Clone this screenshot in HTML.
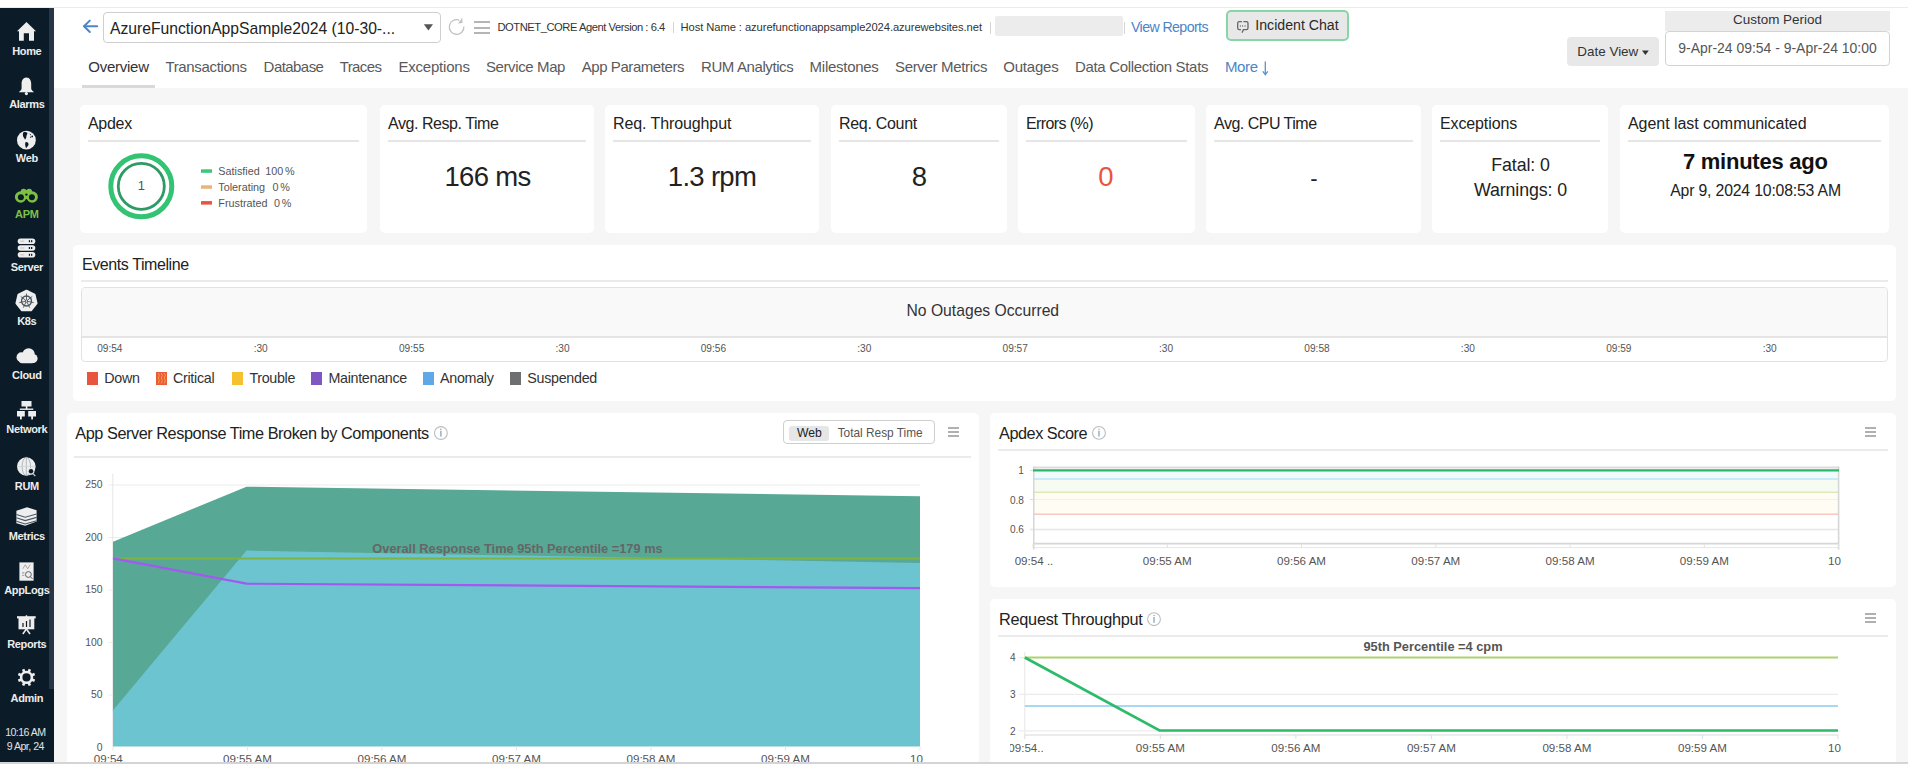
<!DOCTYPE html><html><head><meta charset="utf-8"><style>
html,body{margin:0;padding:0;}
body{width:1908px;height:764px;position:relative;overflow:hidden;background:#f6f6f6;font-family:"Liberation Sans",sans-serif;}
.t{position:absolute;white-space:nowrap;}
.r{position:absolute;box-sizing:border-box;}
svg{position:absolute;overflow:visible;}
</style></head><body>

<div class="r" style="left:0px;top:0px;width:1908px;height:8px;background:#fff;"></div>
<div class="r" style="left:0px;top:7px;width:1908px;height:1px;background:#ebebeb;"></div>
<div class="r" style="left:54px;top:8px;width:1854px;height:80px;background:#fff;"></div>
<div class="r" style="left:0px;top:8px;width:54px;height:754px;background:#0b1c28;"></div>
<div class="r" style="left:49px;top:8px;width:5px;height:681px;background:#263646;"></div>
<div class="t" style="top:45.89px;font-size:11px;line-height:11px;color:#ededed;font-weight:700;letter-spacing:-0.35px;left:-373.2px;width:800px;text-align:center;">Home</div>
<div class="t" style="top:99.49px;font-size:11px;line-height:11px;color:#ededed;font-weight:700;letter-spacing:-0.35px;left:-373.2px;width:800px;text-align:center;">Alarms</div>
<div class="t" style="top:153.49px;font-size:11px;line-height:11px;color:#ededed;font-weight:700;letter-spacing:-0.35px;left:-373.2px;width:800px;text-align:center;">Web</div>
<div class="t" style="top:208.69px;font-size:11px;line-height:11px;color:#7dc242;font-weight:700;letter-spacing:-0.35px;left:-373.2px;width:800px;text-align:center;">APM</div>
<div class="t" style="top:261.79px;font-size:11px;line-height:11px;color:#ededed;font-weight:700;letter-spacing:-0.35px;left:-373.2px;width:800px;text-align:center;">Server</div>
<div class="t" style="top:315.79px;font-size:11px;line-height:11px;color:#ededed;font-weight:700;letter-spacing:-0.35px;left:-373.2px;width:800px;text-align:center;">K8s</div>
<div class="t" style="top:369.59px;font-size:11px;line-height:11px;color:#ededed;font-weight:700;letter-spacing:-0.35px;left:-373.2px;width:800px;text-align:center;">Cloud</div>
<div class="t" style="top:423.59px;font-size:11px;line-height:11px;color:#ededed;font-weight:700;letter-spacing:-0.35px;left:-373.2px;width:800px;text-align:center;">Network</div>
<div class="t" style="top:481.09px;font-size:11px;line-height:11px;color:#ededed;font-weight:700;letter-spacing:-0.35px;left:-373.2px;width:800px;text-align:center;">RUM</div>
<div class="t" style="top:530.79px;font-size:11px;line-height:11px;color:#ededed;font-weight:700;letter-spacing:-0.35px;left:-373.2px;width:800px;text-align:center;">Metrics</div>
<div class="t" style="top:584.79px;font-size:11px;line-height:11px;color:#ededed;font-weight:700;letter-spacing:-0.35px;left:-373.2px;width:800px;text-align:center;">AppLogs</div>
<div class="t" style="top:638.79px;font-size:11px;line-height:11px;color:#ededed;font-weight:700;letter-spacing:-0.35px;left:-373.2px;width:800px;text-align:center;">Reports</div>
<div class="t" style="top:692.79px;font-size:11px;line-height:11px;color:#ededed;font-weight:700;letter-spacing:-0.35px;left:-373.2px;width:800px;text-align:center;">Admin</div>
<div class="t" style="top:726.63px;font-size:10.6px;line-height:10.6px;color:#e2e2e2;letter-spacing:-0.55px;left:-374.7px;width:800px;text-align:center;">10:16 AM</div>
<div class="t" style="top:740.63px;font-size:10.6px;line-height:10.6px;color:#e2e2e2;letter-spacing:-0.5px;left:-374.7px;width:800px;text-align:center;">9 Apr, 24</div>
<svg style="left:0;top:0" width="54" height="764"><g fill="#eeeeee"><path d="M17 31.2 L26.5 22 L36 31.2 L34 31.2 L34 40.7 L29 40.7 L29 33.3 L23.8 33.3 L23.8 40.7 L19 40.7 L19 31.2 Z"/><path d="M26.4 77.5 C23 77.5 21.6 80.5 21.6 84 L21.6 88.5 C21.6 90 20 91 18.8 92.3 L34 92.3 C32.8 91 31.2 90 31.2 88.5 L31.2 84 C31.2 80.5 29.8 77.5 26.4 77.5 Z"/><circle cx="26.4" cy="93.6" r="1.6"/><circle cx="26.4" cy="140.2" r="9.4"/></g><g fill="#0b1c28"><path d="M23.3 132.6 C24.5 131.8 26.3 132 27.2 132.8 C27.8 133.6 27 134.6 26.6 135.4 C26.2 136.4 26.6 137.4 25.8 138.6 C25.3 139.6 24.8 139.8 24.6 139 C24.4 138 23.6 137.6 23.2 136.6 C22.8 135.4 22.7 133.4 23.3 132.6Z"/><path d="M26.2 142 C27.6 142.2 28.8 143.2 28.6 144.6 C28.4 145.8 27.4 146.6 26.6 147.8 C26.2 148.2 25.8 147.8 25.7 147.2 C25.4 145.8 25 144.6 25.2 143.2 C25.3 142.4 25.6 142 26.2 142Z"/><path d="M29.6 133.6 L31 134.2 L30.4 135.6 Z"/><circle cx="32.2" cy="136.4" r="0.9"/><circle cx="30.6" cy="137.2" r="0.6"/></g></svg>
<svg style="left:0;top:0" width="54" height="764"><g fill="#7cc142"><circle cx="20.6" cy="197" r="5.7"/><circle cx="32.2" cy="197" r="5.7"/><circle cx="23.6" cy="191.6" r="2.9"/><circle cx="29.2" cy="191.6" r="2.9"/><rect x="23" y="190" width="6.8" height="9"/></g><g fill="#0b1c28"><circle cx="20.9" cy="197.3" r="3.0"/><circle cx="31.9" cy="197.3" r="3.0"/><circle cx="26.4" cy="194.6" r="1.2"/></g></svg>
<svg style="left:0;top:0" width="54" height="764"><g fill="#eeeeee"><rect x="17.7" y="238.4" width="17.6" height="5.6" rx="2.8"/><rect x="17.7" y="245.2" width="17.6" height="5.6" rx="2.8"/><rect x="17.7" y="252" width="17.6" height="5.6" rx="2.8"/></g><g fill="#0b1c28"><rect x="28.8" y="240.2" width="1.3" height="2"/><rect x="31" y="240.2" width="1.3" height="2"/><rect x="28.8" y="247" width="1.3" height="2"/><rect x="31" y="247" width="1.3" height="2"/><rect x="28.8" y="253.8" width="1.3" height="2"/><rect x="31" y="253.8" width="1.3" height="2"/></g><g fill="#c9c9c9"><rect x="20.2" y="240.6" width="4" height="1.2"/><rect x="20.2" y="247.4" width="4" height="1.2"/><rect x="20.2" y="254.2" width="4" height="1.2"/></g></svg>
<svg style="left:0;top:0" width="54" height="764"><polygon points="26.50,290.80 34.47,294.64 36.44,303.27 30.93,310.19 22.07,310.19 16.56,303.27 18.53,294.64" fill="#eeeeee" stroke="#eeeeee" stroke-width="2.2" stroke-linejoin="round"/><g stroke="#46525c" fill="none"><circle cx="26.5" cy="301.0" r="5.0" stroke-width="1.3"/><g stroke-width="0.9"><line x1="26.50" y1="299.80" x2="26.50" y2="293.60"/><line x1="27.44" y1="300.25" x2="32.29" y2="296.39"/><line x1="27.67" y1="301.27" x2="33.71" y2="302.65"/><line x1="27.02" y1="302.08" x2="29.71" y2="307.67"/><line x1="25.98" y1="302.08" x2="23.29" y2="307.67"/><line x1="25.33" y1="301.27" x2="19.29" y2="302.65"/><line x1="25.56" y1="300.25" x2="20.71" y2="296.39"/></g><circle cx="26.5" cy="301.0" r="1.2" stroke-width="0.9"/></g></svg>
<svg style="left:0;top:0" width="54" height="764"><g fill="#eeeeee"><circle cx="28.6" cy="354.5" r="6.2"/><circle cx="21.5" cy="357.2" r="5"/><circle cx="33" cy="358.5" r="4.6"/><rect x="19" y="357" width="16" height="6.3" rx="3"/></g></svg>
<svg style="left:0;top:0" width="54" height="764"><g fill="#eeeeee"><rect x="21.5" y="401" width="10" height="5.5"/><rect x="25.8" y="406" width="1.6" height="3.2"/><rect x="19.8" y="408.5" width="13.5" height="1.4"/><rect x="17" y="411" width="7.8" height="5.5"/><rect x="28.2" y="411" width="7.8" height="5.5"/><rect x="20" y="416" width="1.8" height="3.4"/><rect x="31.2" y="416" width="1.8" height="3.4"/></g></svg>
<svg style="left:0;top:0" width="54" height="764"><circle cx="26.3" cy="466.5" r="9.3" fill="#eeeeee"/><g stroke="#9aa4ab" stroke-width="0.7" fill="none"><ellipse cx="26.3" cy="466.5" rx="4.2" ry="9.2"/><line x1="26.3" y1="457.3" x2="26.3" y2="475.7"/><line x1="17.2" y1="466.5" x2="35.4" y2="466.5" stroke="#c8ced2"/></g><circle cx="31" cy="471.3" r="3.4" fill="#e6e6e6"/><circle cx="31" cy="471.3" r="2.2" fill="#0b1c28"/><line x1="33.2" y1="473.8" x2="35.3" y2="476.2" stroke="#cfcfcf" stroke-width="1.2"/></svg>
<svg style="left:0;top:0" width="54" height="764"><path d="M16.4 510.8 L27 507.3 L36.6 510.2 L36.6 521.6 L25.2 525.8 L16.4 523.2 Z" fill="#eeeeee"/><path d="M16.4 514.4 L25.2 517.2 L36.6 514.0" fill="none" stroke="#4a5863" stroke-width="1.1"/><path d="M16.4 517.8 L25.2 520.6 L36.6 517.4" fill="none" stroke="#4a5863" stroke-width="1.1"/><path d="M16.4 521.2 L25.2 524.0 L36.6 520.8" fill="none" stroke="#4a5863" stroke-width="1.1"/></svg>
<svg style="left:0;top:0" width="54" height="764"><rect x="19.4" y="562.4" width="14.2" height="18.3" fill="#eeeeee"/><path d="M22.8 568.8 L25.3 564.8 L27.7 568.8 L30.2 564.6" stroke="#9a9a9a" stroke-width="0.8" fill="none"/><circle cx="28.4" cy="574.5" r="2.9" stroke="#5a5f63" stroke-width="1.0" fill="none"/><line x1="30.5" y1="576.8" x2="32.6" y2="579" stroke="#666" stroke-width="1.0"/><rect x="22" y="572.3" width="2.4" height="1.1" fill="#9a9a9a"/><rect x="22" y="574.8" width="2.4" height="1.1" fill="#aaa"/></svg>
<svg style="left:0;top:0" width="54" height="764"><g fill="#eeeeee"><rect x="17" y="616.2" width="18.7" height="2.2"/><rect x="18.5" y="617" width="15.8" height="12.3"/><rect x="25.8" y="615.2" width="1.4" height="2"/></g><g stroke="#0b1c28" stroke-width="1.2"><line x1="23" y1="623" x2="23" y2="627"/><line x1="26.5" y1="621" x2="26.5" y2="627"/><line x1="30" y1="619.5" x2="30" y2="627"/></g><g stroke="#eeeeee" stroke-width="1.5"><line x1="26.4" y1="629" x2="22.8" y2="634"/><line x1="26.4" y1="629" x2="30" y2="634"/></g></svg>
<svg style="left:0;top:0" width="54" height="764"><circle cx="26.5" cy="677.4" r="5.4" fill="none" stroke="#eeeeee" stroke-width="2.6"/><g stroke="#eeeeee" stroke-width="2.6" stroke-linecap="butt"><line x1="31.12" y1="679.31" x2="34.63" y2="680.77"/><line x1="28.41" y1="682.02" x2="29.87" y2="685.53"/><line x1="24.59" y1="682.02" x2="23.13" y2="685.53"/><line x1="21.88" y1="679.31" x2="18.37" y2="680.77"/><line x1="21.88" y1="675.49" x2="18.37" y2="674.03"/><line x1="24.59" y1="672.78" x2="23.13" y2="669.27"/><line x1="28.41" y1="672.78" x2="29.87" y2="669.27"/><line x1="31.12" y1="675.49" x2="34.63" y2="674.03"/></g></svg>
<svg style="left:0;top:0" width="120" height="60"><g stroke="#4d86c8" stroke-width="2" fill="none" stroke-linecap="round" stroke-linejoin="round"><path d="M89.8 20.6 L84 26.3 L89.8 32"/><line x1="84.2" y1="26.3" x2="97.2" y2="26.3"/></g></svg>
<div class="r" style="left:103px;top:12px;width:338px;height:31px;background:#fff;border:1px solid #cfcfcf;border-radius:4px;"></div>
<div class="t" style="top:20.51px;font-size:15.7px;line-height:15.7px;color:#222;left:110px;">AzureFunctionAppSample2024 (10-30-...</div>
<svg style="left:0;top:0" width="500" height="60"><path d="M423.8 24.3 L433 24.3 L428.4 30.6 Z" fill="#555"/></svg>
<svg style="left:0;top:0" width="520" height="60"><path d="M463.9 26.5 A7.3 7.3 0 1 1 459.3 20.2" fill="none" stroke="#c2c2c2" stroke-width="1.3"/><path d="M457.9 23.6 L462.3 17.8 L462.5 23.1 Z" fill="#c2c2c2"/></svg>
<div class="r" style="left:474px;top:21.3px;width:16px;height:2px;background:#b5b5b5;"></div>
<div class="r" style="left:474px;top:26.7px;width:16px;height:2px;background:#b5b5b5;"></div>
<div class="r" style="left:474px;top:32px;width:16px;height:2px;background:#b5b5b5;"></div>
<div class="t" style="top:22.12px;font-size:11.2px;line-height:11.2px;color:#333;letter-spacing:-0.46px;left:497.5px;">DOTNET_CORE Agent Version : 6.4</div>
<div class="r" style="left:673px;top:21.7px;width:1px;height:11.3px;background:#d5d5d5;"></div>
<div class="t" style="top:22.12px;font-size:11.2px;line-height:11.2px;color:#333;letter-spacing:-0.07px;left:680.5px;">Host Name : azurefunctionappsample2024.azurewebsites.net</div>
<div class="r" style="left:990px;top:21.5px;width:1px;height:12px;background:#d5d5d5;"></div>
<div class="r" style="left:995px;top:16px;width:128px;height:20px;background:#ececec;border-radius:2px;"></div>
<div class="r" style="left:1124px;top:21.5px;width:1px;height:12px;background:#d5d5d5;"></div>
<div class="t" style="top:19.68px;font-size:14.2px;line-height:14.2px;color:#4a85c8;letter-spacing:-0.6px;left:1131px;">View Reports</div>
<div class="r" style="left:1226px;top:10px;width:123px;height:30.5px;background:#e8e8e8;border:2px solid #86d6a6;border-radius:5px;"></div>
<svg style="left:0;top:0" width="1300" height="60"><g fill="none" stroke="#666" stroke-width="1.3" stroke-linecap="round"><path d="M1241.4 21.7 L1239.3 21.7 Q1237.7 21.7 1237.7 23.3 L1237.7 28.1 Q1237.7 29.7 1239.3 29.7 L1240.5 29.7"/><path d="M1243.9 21.7 L1246.4 21.7 Q1248 21.7 1248 23.3 L1248 28.1 Q1248 29.7 1246.4 29.7 L1243.4 29.7 L1242.2 32.2"/></g><g fill="#888"><rect x="1239.9" y="25" width="0.9" height="2"/><rect x="1242.2" y="25" width="0.9" height="2"/><rect x="1244.6" y="25" width="0.9" height="2"/></g></svg>
<div class="t" style="top:18.32px;font-size:14.15px;line-height:14.15px;color:#2a2a2a;left:1255.3px;">Incident Chat</div>
<div class="r" style="left:1567px;top:36.5px;width:92px;height:29px;background:#e8e8e8;border-radius:4px;"></div>
<div class="t" style="top:44.71px;font-size:13.45px;line-height:13.45px;color:#333;left:1577.3px;">Date View</div>
<svg style="left:0;top:0" width="1700" height="70"><path d="M1642 50.5 L1648.8 50.5 L1645.4 55 Z" fill="#333"/></svg>
<div class="r" style="left:1665px;top:10.7px;width:225px;height:20px;background:#ececec;"></div>
<div class="t" style="top:13.01px;font-size:13.45px;line-height:13.45px;color:#333;left:1377.5px;width:800px;text-align:center;">Custom Period</div>
<div class="r" style="left:1665px;top:30.8px;width:225px;height:35px;background:#fff;border:1px solid #d3d3d3;border-radius:4px;"></div>
<div class="t" style="top:42.39px;font-size:13.95px;line-height:13.95px;color:#555;left:1377.5px;width:800px;text-align:center;">9-Apr-24 09:54 - 9-Apr-24 10:00</div>
<div class="t" style="top:58.90px;font-size:15px;line-height:15px;color:#333;letter-spacing:-0.26px;left:88.30000000000001px;">Overview</div>
<div class="t" style="top:58.90px;font-size:15px;line-height:15px;color:#5a5a5a;letter-spacing:-0.33px;left:165.4px;">Transactions</div>
<div class="t" style="top:58.90px;font-size:15px;line-height:15px;color:#5a5a5a;letter-spacing:-0.55px;left:263.59999999999997px;">Database</div>
<div class="t" style="top:58.90px;font-size:15px;line-height:15px;color:#5a5a5a;letter-spacing:-0.6px;left:339.7px;">Traces</div>
<div class="t" style="top:58.90px;font-size:15px;line-height:15px;color:#5a5a5a;letter-spacing:-0.2px;left:398.4px;">Exceptions</div>
<div class="t" style="top:58.90px;font-size:15px;line-height:15px;color:#5a5a5a;letter-spacing:-0.38px;left:485.9px;">Service Map</div>
<div class="t" style="top:58.90px;font-size:15px;line-height:15px;color:#5a5a5a;letter-spacing:-0.43px;left:581.6999999999999px;">App Parameters</div>
<div class="t" style="top:58.90px;font-size:15px;line-height:15px;color:#5a5a5a;letter-spacing:-0.4px;left:701.0px;">RUM Analytics</div>
<div class="t" style="top:58.90px;font-size:15px;line-height:15px;color:#5a5a5a;letter-spacing:-0.27px;left:809.6px;">Milestones</div>
<div class="t" style="top:58.90px;font-size:15px;line-height:15px;color:#5a5a5a;letter-spacing:-0.33px;left:895.0px;">Server Metrics</div>
<div class="t" style="top:58.90px;font-size:15px;line-height:15px;color:#5a5a5a;letter-spacing:-0.22px;left:1003.3px;">Outages</div>
<div class="t" style="top:58.90px;font-size:15px;line-height:15px;color:#5a5a5a;letter-spacing:-0.33px;left:1075.0px;">Data Collection Stats</div>
<div class="t" style="top:58.90px;font-size:15px;line-height:15px;color:#4a86c8;letter-spacing:-0.4px;left:1225.0px;">More</div>
<svg style="left:0;top:0" width="1300" height="90"><g stroke="#5a94d0" stroke-width="1.3" fill="none"><line x1="1265.3" y1="61.4" x2="1265.3" y2="74"/><path d="M1262.8 71.3 L1265.3 74.6 L1267.8 71.3"/></g></svg>
<div class="r" style="left:82px;top:85px;width:73px;height:3px;background:#d9d9d9;"></div>
<div class="r" style="left:80px;top:105px;width:287px;height:128px;background:#fff;border-radius:5px;"></div>
<div class="t" style="top:116.46px;font-size:16px;line-height:16px;color:#222;letter-spacing:-0.3px;left:88px;">Apdex</div>
<div class="r" style="left:88px;top:140px;width:271px;height:2px;background:#e6e6e6;"></div>
<div class="r" style="left:380px;top:105px;width:214px;height:128px;background:#fff;border-radius:5px;"></div>
<div class="t" style="top:116.46px;font-size:16px;line-height:16px;color:#222;letter-spacing:-0.45px;left:388px;">Avg. Resp. Time</div>
<div class="r" style="left:388px;top:140px;width:198px;height:2px;background:#e6e6e6;"></div>
<div class="r" style="left:605px;top:105px;width:214px;height:128px;background:#fff;border-radius:5px;"></div>
<div class="t" style="top:116.46px;font-size:16px;line-height:16px;color:#222;letter-spacing:-0.1px;left:613px;">Req. Throughput</div>
<div class="r" style="left:613px;top:140px;width:198px;height:2px;background:#e6e6e6;"></div>
<div class="r" style="left:831px;top:105px;width:176px;height:128px;background:#fff;border-radius:5px;"></div>
<div class="t" style="top:116.46px;font-size:16px;line-height:16px;color:#222;letter-spacing:-0.3px;left:839px;">Req. Count</div>
<div class="r" style="left:839px;top:140px;width:160px;height:2px;background:#e6e6e6;"></div>
<div class="r" style="left:1018px;top:105px;width:177px;height:128px;background:#fff;border-radius:5px;"></div>
<div class="t" style="top:116.46px;font-size:16px;line-height:16px;color:#222;letter-spacing:-0.6px;left:1026px;">Errors (%)</div>
<div class="r" style="left:1026px;top:140px;width:161px;height:2px;background:#e6e6e6;"></div>
<div class="r" style="left:1206px;top:105px;width:215px;height:128px;background:#fff;border-radius:5px;"></div>
<div class="t" style="top:116.46px;font-size:16px;line-height:16px;color:#222;letter-spacing:-0.5px;left:1214px;">Avg. CPU Time</div>
<div class="r" style="left:1214px;top:140px;width:199px;height:2px;background:#e6e6e6;"></div>
<div class="r" style="left:1432px;top:105px;width:176px;height:128px;background:#fff;border-radius:5px;"></div>
<div class="t" style="top:116.46px;font-size:16px;line-height:16px;color:#222;letter-spacing:-0.12px;left:1440px;">Exceptions</div>
<div class="r" style="left:1440px;top:140px;width:160px;height:2px;background:#e6e6e6;"></div>
<div class="r" style="left:1620px;top:105px;width:269px;height:128px;background:#fff;border-radius:5px;"></div>
<div class="t" style="top:116.46px;font-size:16px;line-height:16px;color:#222;letter-spacing:-0.05px;left:1628px;">Agent last communicated</div>
<div class="r" style="left:1628px;top:140px;width:253px;height:2px;background:#e6e6e6;"></div>
<svg style="left:0;top:0" width="400" height="240"><circle cx="141.3" cy="186.3" r="30.5" fill="none" stroke="#32c472" stroke-width="5"/><circle cx="141.3" cy="186.3" r="23" fill="none" stroke="#2e9a64" stroke-width="2.8"/><rect x="201" y="169.3" width="11" height="3.5" fill="#3cc77a"/><rect x="201" y="185.3" width="11" height="3.5" fill="#e9b47a"/><rect x="201" y="201.1" width="11" height="3.5" fill="#e8553e"/></svg>
<div class="t" style="top:178.60px;font-size:13px;line-height:13px;color:#555;left:-258.7px;width:800px;text-align:center;">1</div>
<div class="t" style="top:166.46px;font-size:10.8px;line-height:10.8px;color:#555;left:218.3px;">Satisfied</div>
<div class="t" style="top:182.06px;font-size:10.8px;line-height:10.8px;color:#555;left:218.3px;">Tolerating</div>
<div class="t" style="top:198.46px;font-size:10.8px;line-height:10.8px;color:#555;left:218.3px;">Frustrated</div>
<div class="t" style="top:166.46px;font-size:10.8px;line-height:10.8px;color:#555;left:265.3px;">100<span style="margin-left:1.6px">%</span></div>
<div class="t" style="top:182.06px;font-size:10.8px;line-height:10.8px;color:#555;left:272.6px;">0<span style="margin-left:1.6px">%</span></div>
<div class="t" style="top:198.46px;font-size:10.8px;line-height:10.8px;color:#555;left:274.1px;">0<span style="margin-left:1.6px">%</span></div>
<div class="t" style="top:163.42px;font-size:27.5px;line-height:27.5px;color:#222;letter-spacing:-0.7px;left:87.5px;width:800px;text-align:center;">166 ms</div>
<div class="t" style="top:163.22px;font-size:27.5px;line-height:27.5px;color:#222;letter-spacing:-0.7px;left:312.0px;width:800px;text-align:center;">1.3 rpm</div>
<div class="t" style="top:163.22px;font-size:27.5px;line-height:27.5px;color:#222;left:519.5px;width:800px;text-align:center;">8</div>
<div class="t" style="top:163.12px;font-size:27.5px;line-height:27.5px;color:#e8553e;left:706.0px;width:800px;text-align:center;">0</div>
<div class="t" style="top:167.78px;font-size:22px;line-height:22px;color:#222;left:914.0px;width:800px;text-align:center;">-</div>
<div class="t" style="top:156.73px;font-size:17.8px;line-height:17.8px;color:#222;letter-spacing:-0.1px;left:1120.5px;width:800px;text-align:center;">Fatal: 0</div>
<div class="t" style="top:182.33px;font-size:17.8px;line-height:17.8px;color:#222;letter-spacing:-0.1px;left:1120.5px;width:800px;text-align:center;">Warnings: 0</div>
<div class="t" style="top:151.28px;font-size:22px;line-height:22px;color:#111;font-weight:700;letter-spacing:-0.25px;left:1355.3px;width:800px;text-align:center;">7 minutes ago</div>
<div class="t" style="top:182.83px;font-size:15.8px;line-height:15.8px;color:#222;letter-spacing:-0.18px;left:1355.6px;width:800px;text-align:center;">Apr 9, 2024 10:08:53 AM</div>
<div class="r" style="left:73px;top:245px;width:823px;height:156px;background:#fff;border-radius:5px;"></div>
<div class="r" style="left:73px;top:245px;width:1823px;height:156px;background:#fff;border-radius:5px;"></div>
<div class="t" style="top:256.66px;font-size:16px;line-height:16px;color:#222;letter-spacing:-0.42px;left:82px;">Events Timeline</div>
<div class="r" style="left:81px;top:280px;width:1807px;height:2px;background:#ebebeb;"></div>
<div class="r" style="left:81px;top:287px;width:1807px;height:75px;background:#fff;border:1px solid #e2e2e2;border-radius:4px;"></div>
<div class="r" style="left:82px;top:288px;width:1805px;height:48px;background:#f9f9f9;border-radius:3px 3px 0 0;"></div>
<div class="r" style="left:82px;top:336px;width:1805px;height:1.5px;background:#e4e4e4;"></div>
<div class="t" style="top:303.01px;font-size:15.7px;line-height:15.7px;color:#333;left:582.8px;width:800px;text-align:center;">No Outages Occurred</div>
<div class="t" style="top:343.71px;font-size:10.15px;line-height:10.15px;color:#555;left:-290.2px;width:800px;text-align:center;">09:54</div>
<div class="t" style="top:343.71px;font-size:10.15px;line-height:10.15px;color:#555;left:-139.3px;width:800px;text-align:center;">:30</div>
<div class="t" style="top:343.71px;font-size:10.15px;line-height:10.15px;color:#555;left:11.600000000000023px;width:800px;text-align:center;">09:55</div>
<div class="t" style="top:343.71px;font-size:10.15px;line-height:10.15px;color:#555;left:162.5px;width:800px;text-align:center;">:30</div>
<div class="t" style="top:343.71px;font-size:10.15px;line-height:10.15px;color:#555;left:313.4px;width:800px;text-align:center;">09:56</div>
<div class="t" style="top:343.71px;font-size:10.15px;line-height:10.15px;color:#555;left:464.29999999999995px;width:800px;text-align:center;">:30</div>
<div class="t" style="top:343.71px;font-size:10.15px;line-height:10.15px;color:#555;left:615.2px;width:800px;text-align:center;">09:57</div>
<div class="t" style="top:343.71px;font-size:10.15px;line-height:10.15px;color:#555;left:766.0999999999999px;width:800px;text-align:center;">:30</div>
<div class="t" style="top:343.71px;font-size:10.15px;line-height:10.15px;color:#555;left:917.0px;width:800px;text-align:center;">09:58</div>
<div class="t" style="top:343.71px;font-size:10.15px;line-height:10.15px;color:#555;left:1067.9px;width:800px;text-align:center;">:30</div>
<div class="t" style="top:343.71px;font-size:10.15px;line-height:10.15px;color:#555;left:1218.8px;width:800px;text-align:center;">09:59</div>
<div class="t" style="top:343.71px;font-size:10.15px;line-height:10.15px;color:#555;left:1369.7px;width:800px;text-align:center;">:30</div>
<div class="r" style="left:86.8px;top:372px;width:11px;height:12.5px;background:#e8553e;"></div>
<div class="t" style="top:370.90px;font-size:14.3px;line-height:14.3px;color:#333;letter-spacing:-0.3px;left:104.3px;">Down</div>
<div class="r" style="left:156.3px;top:372px;width:11px;height:12.5px;background:#ea5b3b;"></div>
<div class="t" style="top:370.90px;font-size:14.3px;line-height:14.3px;color:#333;letter-spacing:-0.3px;left:173px;">Critical</div>
<div class="r" style="left:232px;top:372px;width:11px;height:12.5px;background:#f6c12e;"></div>
<div class="t" style="top:370.90px;font-size:14.3px;line-height:14.3px;color:#333;letter-spacing:-0.35px;left:249.5px;">Trouble</div>
<div class="r" style="left:311px;top:372px;width:11px;height:12.5px;background:#7e57c2;"></div>
<div class="t" style="top:370.90px;font-size:14.3px;line-height:14.3px;color:#333;letter-spacing:-0.3px;left:328.4px;">Maintenance</div>
<div class="r" style="left:423.3px;top:372px;width:11px;height:12.5px;background:#5fa8e8;"></div>
<div class="t" style="top:370.90px;font-size:14.3px;line-height:14.3px;color:#333;letter-spacing:-0.3px;left:440px;">Anomaly</div>
<div class="r" style="left:510.2px;top:372px;width:11px;height:12.5px;background:#6d6f70;"></div>
<div class="t" style="top:370.90px;font-size:14.3px;line-height:14.3px;color:#333;letter-spacing:-0.3px;left:527.3px;">Suspended</div>
<svg style="left:0;top:0" width="300" height="400"><g fill="none" stroke="#f6a03f" stroke-width="1"><path d="M158.3 373 L159.3 375.5 L158.3 378 L159.3 380.5 L158.3 383.5"/><path d="M161.3 373 L162.3 375.5 L161.3 378 L162.3 380.5 L161.3 383.5"/><path d="M164.3 373 L165.3 375.5 L164.3 378 L165.3 380.5 L164.3 383.5"/></g></svg>
<div class="r" style="left:67px;top:413px;width:912px;height:351px;background:#fff;border-radius:5px 5px 0 0;"></div>
<div class="t" style="top:425.10px;font-size:16.3px;line-height:16.3px;color:#222;letter-spacing:-0.45px;left:75.3px;">App Server Response Time Broken by Components</div>
<div class="r" style="left:74px;top:456px;width:897px;height:2px;background:#ebebeb;"></div>
<div class="r" style="left:990px;top:413px;width:906px;height:174px;background:#fff;border-radius:5px;"></div>
<div class="t" style="top:425.00px;font-size:16.3px;line-height:16.3px;color:#222;letter-spacing:-0.47px;left:999px;">Apdex Score</div>
<div class="r" style="left:998px;top:449px;width:890px;height:2px;background:#ebebeb;"></div>
<div class="r" style="left:990px;top:599px;width:906px;height:165px;background:#fff;border-radius:5px 5px 0 0;"></div>
<div class="t" style="top:611.20px;font-size:16.3px;line-height:16.3px;color:#222;letter-spacing:-0.25px;left:999px;">Request Throughput</div>
<div class="r" style="left:998px;top:635px;width:890px;height:2px;background:#ebebeb;"></div>
<svg style="left:0;top:0" width="1908" height="764"><circle cx="440.9" cy="433" r="6.4" fill="none" stroke="#bdbdbd" stroke-width="1.1"/><rect x="440.29999999999995" y="430.8" width="1.2" height="5.8" fill="#7e9cbd"/><circle cx="440.9" cy="429.2" r="0.7" fill="#7e9cbd"/></svg>
<svg style="left:0;top:0" width="1908" height="764"><circle cx="1099" cy="432.9" r="6.4" fill="none" stroke="#bdbdbd" stroke-width="1.1"/><rect x="1098.4" y="430.7" width="1.2" height="5.8" fill="#7e9cbd"/><circle cx="1099" cy="429.09999999999997" r="0.7" fill="#7e9cbd"/></svg>
<svg style="left:0;top:0" width="1908" height="764"><circle cx="1154" cy="619.2" r="6.4" fill="none" stroke="#bdbdbd" stroke-width="1.1"/><rect x="1153.4" y="617.0" width="1.2" height="5.8" fill="#7e9cbd"/><circle cx="1154" cy="615.4000000000001" r="0.7" fill="#7e9cbd"/></svg>
<div class="r" style="left:947.7px;top:426.8px;width:11.5px;height:2px;background:#b0b0b0;"></div>
<div class="r" style="left:947.7px;top:430.8px;width:11.5px;height:2px;background:#b0b0b0;"></div>
<div class="r" style="left:947.7px;top:434.8px;width:11.5px;height:2px;background:#b0b0b0;"></div>
<div class="r" style="left:1864.8px;top:426.7px;width:11.5px;height:2px;background:#b0b0b0;"></div>
<div class="r" style="left:1864.8px;top:430.7px;width:11.5px;height:2px;background:#b0b0b0;"></div>
<div class="r" style="left:1864.8px;top:434.7px;width:11.5px;height:2px;background:#b0b0b0;"></div>
<div class="r" style="left:1864.8px;top:612.8px;width:11.5px;height:2px;background:#b0b0b0;"></div>
<div class="r" style="left:1864.8px;top:616.8px;width:11.5px;height:2px;background:#b0b0b0;"></div>
<div class="r" style="left:1864.8px;top:620.8px;width:11.5px;height:2px;background:#b0b0b0;"></div>
<div class="r" style="left:783px;top:420px;width:152px;height:24px;background:#fff;border:1px solid #cfcfcf;border-radius:4px;"></div>
<div class="r" style="left:789.4px;top:425.5px;width:40px;height:15.5px;background:#e6e6e6;border-radius:3px;"></div>
<div class="t" style="top:427.27px;font-size:12.2px;line-height:12.2px;color:#222;left:797px;">Web</div>
<div class="t" style="top:427.57px;font-size:11.85px;line-height:11.85px;color:#555;left:837.7px;">Total Resp Time</div>
<svg style="left:0;top:0" width="1908" height="764"><line x1="108.5" y1="695.1" x2="920" y2="695.1" stroke="#ececec" stroke-width="1"/><line x1="108.5" y1="642.6" x2="920" y2="642.6" stroke="#ececec" stroke-width="1"/><line x1="108.5" y1="590.0" x2="920" y2="590.0" stroke="#ececec" stroke-width="1"/><line x1="108.5" y1="537.5" x2="920" y2="537.5" stroke="#ececec" stroke-width="1"/><line x1="108.5" y1="485.0" x2="920" y2="485.0" stroke="#ececec" stroke-width="1"/><line x1="112.8" y1="473.5" x2="112.8" y2="747" stroke="#e6e6e6" stroke-width="1"/><path d="M113 541.7 L246.5 486.7 L920 496.2 L920 746.2 L113 746.2 Z" fill="#57a894"/><path d="M113 710.2 L246.5 550.5 L920 563 L920 746.2 L113 746.2 Z" fill="#6bc4d0"/><line x1="113" y1="558.4" x2="920" y2="558.4" stroke="#7cb342" stroke-width="2"/><path d="M113 558.3 L246.5 583.7 L920 588.2" fill="none" stroke="#a358f0" stroke-width="2.2"/><line x1="113.0" y1="746.2" x2="113.0" y2="750.5" stroke="#e6e6e6" stroke-width="1"/><line x1="247.5" y1="746.2" x2="247.5" y2="750.5" stroke="#e6e6e6" stroke-width="1"/><line x1="382.0" y1="746.2" x2="382.0" y2="750.5" stroke="#e6e6e6" stroke-width="1"/><line x1="516.5" y1="746.2" x2="516.5" y2="750.5" stroke="#e6e6e6" stroke-width="1"/><line x1="651.0" y1="746.2" x2="651.0" y2="750.5" stroke="#e6e6e6" stroke-width="1"/><line x1="785.5" y1="746.2" x2="785.5" y2="750.5" stroke="#e6e6e6" stroke-width="1"/><line x1="920.0" y1="746.2" x2="920.0" y2="750.5" stroke="#e6e6e6" stroke-width="1"/></svg>
<div class="t" style="top:542.76px;font-size:12.8px;line-height:12.8px;color:#666;font-weight:700;left:117.5px;width:800px;text-align:center;">Overall Response Time 95th Percentile =179 ms</div>
<div class="t" style="top:480.40px;font-size:10.4px;line-height:10.4px;color:#555;left:-697.4px;width:800px;text-align:right;">250</div>
<div class="t" style="top:532.92px;font-size:10.4px;line-height:10.4px;color:#555;left:-697.4px;width:800px;text-align:right;">200</div>
<div class="t" style="top:585.44px;font-size:10.4px;line-height:10.4px;color:#555;left:-697.4px;width:800px;text-align:right;">150</div>
<div class="t" style="top:637.96px;font-size:10.4px;line-height:10.4px;color:#555;left:-697.4px;width:800px;text-align:right;">100</div>
<div class="t" style="top:690.48px;font-size:10.4px;line-height:10.4px;color:#555;left:-697.4px;width:800px;text-align:right;">50</div>
<div class="t" style="top:743.00px;font-size:10.4px;line-height:10.4px;color:#555;left:-697.4px;width:800px;text-align:right;">0</div>
<div class="t" style="top:752.68px;font-size:11.6px;line-height:11.6px;color:#555;left:-291.7px;width:800px;text-align:center;">09:54</div>
<div class="t" style="top:752.68px;font-size:11.6px;line-height:11.6px;color:#555;left:-152.5px;width:800px;text-align:center;">09:55 AM</div>
<div class="t" style="top:752.68px;font-size:11.6px;line-height:11.6px;color:#555;left:-18.0px;width:800px;text-align:center;">09:56 AM</div>
<div class="t" style="top:752.68px;font-size:11.6px;line-height:11.6px;color:#555;left:116.5px;width:800px;text-align:center;">09:57 AM</div>
<div class="t" style="top:752.68px;font-size:11.6px;line-height:11.6px;color:#555;left:251.0px;width:800px;text-align:center;">09:58 AM</div>
<div class="t" style="top:752.68px;font-size:11.6px;line-height:11.6px;color:#555;left:385.5px;width:800px;text-align:center;">09:59 AM</div>
<div class="t" style="top:752.68px;font-size:11.6px;line-height:11.6px;color:#555;left:516.5px;width:800px;text-align:center;">10</div>
<svg style="left:0;top:0" width="1908" height="764"><rect x="1033" y="470.5" width="806" height="8.5" fill="#f1fbfd"/><rect x="1033" y="479" width="806" height="13.3" fill="#f7fcf3"/><rect x="1033" y="492.3" width="806" height="22" fill="#fffdf3"/><line x1="1033" y1="479" x2="1839" y2="479" stroke="#b9e6f4" stroke-width="1.5"/><line x1="1033" y1="492.3" x2="1839" y2="492.3" stroke="#dde9b6" stroke-width="1.5"/><line x1="1033" y1="499.5" x2="1839" y2="499.5" stroke="#f4f2e6" stroke-width="1"/><line x1="1033" y1="514.2" x2="1839" y2="514.2" stroke="#f8c8bf" stroke-width="1.5"/><line x1="1030" y1="529.5" x2="1839" y2="529.5" stroke="#e6e6e6" stroke-width="1.3"/><line x1="1033" y1="543.6" x2="1839" y2="543.6" stroke="#d6d6d6" stroke-width="1.6"/><line x1="1033" y1="547.6" x2="1839" y2="547.6" stroke="#e8e8e8" stroke-width="1"/><line x1="1030" y1="470.4" x2="1033" y2="470.4" stroke="#ddd" stroke-width="1"/><line x1="1030" y1="499.5" x2="1033" y2="499.5" stroke="#ddd" stroke-width="1"/><line x1="1033" y1="467.5" x2="1839" y2="467.5" stroke="#dcdcdc" stroke-width="2"/><line x1="1033.8" y1="466.5" x2="1033.8" y2="549.5" stroke="#d6d6d6" stroke-width="1.5"/><line x1="1838.6" y1="466.5" x2="1838.6" y2="549.5" stroke="#d6d6d6" stroke-width="1.6"/><line x1="1033" y1="470.4" x2="1839" y2="470.4" stroke="#2ab767" stroke-width="2.3"/><line x1="1033.0" y1="543.6" x2="1033.0" y2="548" stroke="#e2e2e2" stroke-width="1"/><line x1="1167.3" y1="543.6" x2="1167.3" y2="548" stroke="#e2e2e2" stroke-width="1"/><line x1="1301.5" y1="543.6" x2="1301.5" y2="548" stroke="#e2e2e2" stroke-width="1"/><line x1="1435.8" y1="543.6" x2="1435.8" y2="548" stroke="#e2e2e2" stroke-width="1"/><line x1="1570.1" y1="543.6" x2="1570.1" y2="548" stroke="#e2e2e2" stroke-width="1"/><line x1="1704.3" y1="543.6" x2="1704.3" y2="548" stroke="#e2e2e2" stroke-width="1"/><line x1="1838.6" y1="543.6" x2="1838.6" y2="548" stroke="#e2e2e2" stroke-width="1"/></svg>
<div class="t" style="top:466.05px;font-size:10.1px;line-height:10.1px;color:#555;left:223.79999999999995px;width:800px;text-align:right;">1</div>
<div class="t" style="top:495.75px;font-size:10.1px;line-height:10.1px;color:#555;left:224px;width:800px;text-align:right;">0.8</div>
<div class="t" style="top:524.55px;font-size:10.1px;line-height:10.1px;color:#555;left:224px;width:800px;text-align:right;">0.6</div>
<div class="t" style="top:554.68px;font-size:11.6px;line-height:11.6px;color:#555;left:634px;width:800px;text-align:center;">09:54 ..</div>
<div class="t" style="top:554.68px;font-size:11.6px;line-height:11.6px;color:#555;left:767.27px;width:800px;text-align:center;">09:55 AM</div>
<div class="t" style="top:554.68px;font-size:11.6px;line-height:11.6px;color:#555;left:901.54px;width:800px;text-align:center;">09:56 AM</div>
<div class="t" style="top:554.68px;font-size:11.6px;line-height:11.6px;color:#555;left:1035.81px;width:800px;text-align:center;">09:57 AM</div>
<div class="t" style="top:554.68px;font-size:11.6px;line-height:11.6px;color:#555;left:1170.08px;width:800px;text-align:center;">09:58 AM</div>
<div class="t" style="top:554.68px;font-size:11.6px;line-height:11.6px;color:#555;left:1304.35px;width:800px;text-align:center;">09:59 AM</div>
<div class="t" style="top:554.68px;font-size:11.6px;line-height:11.6px;color:#555;left:1434.5px;width:800px;text-align:center;">10</div>
<svg style="left:0;top:0" width="1908" height="764"><line x1="1024.8" y1="652" x2="1024.8" y2="735" stroke="#e6e6e6" stroke-width="1"/><line x1="1019" y1="694.3" x2="1838" y2="694.3" stroke="#ececec" stroke-width="1.2"/><line x1="1019" y1="730.8" x2="1838" y2="730.8" stroke="#ececec" stroke-width="1.2"/><line x1="1019" y1="657.7" x2="1838" y2="657.7" stroke="#e6e6e6" stroke-width="1"/><line x1="1024.8" y1="735" x2="1838" y2="735" stroke="#e6e6e6" stroke-width="1.5"/><line x1="1024.8" y1="657.5" x2="1838" y2="657.5" stroke="#aed36e" stroke-width="2"/><line x1="1024.8" y1="706" x2="1838" y2="706" stroke="#a8d8f2" stroke-width="2"/><path d="M1024.8 657.5 L1159.5 730.5 L1838 730.5" fill="none" stroke="#2cbb68" stroke-width="2.7"/><line x1="1024.8" y1="735" x2="1024.8" y2="739" stroke="#ddd" stroke-width="1"/><line x1="1160.3" y1="735" x2="1160.3" y2="739" stroke="#ddd" stroke-width="1"/><line x1="1295.9" y1="735" x2="1295.9" y2="739" stroke="#ddd" stroke-width="1"/><line x1="1431.4" y1="735" x2="1431.4" y2="739" stroke="#ddd" stroke-width="1"/><line x1="1566.9" y1="735" x2="1566.9" y2="739" stroke="#ddd" stroke-width="1"/><line x1="1702.4" y1="735" x2="1702.4" y2="739" stroke="#ddd" stroke-width="1"/><line x1="1838.0" y1="735" x2="1838.0" y2="739" stroke="#ddd" stroke-width="1"/></svg>
<div class="t" style="top:640.86px;font-size:12.8px;line-height:12.8px;color:#555;font-weight:700;left:1033px;width:800px;text-align:center;">95th Percentile =4 cpm</div>
<div class="t" style="top:653.05px;font-size:10.1px;line-height:10.1px;color:#555;left:215.5px;width:800px;text-align:right;">4</div>
<div class="t" style="top:689.65px;font-size:10.1px;line-height:10.1px;color:#555;left:215.5px;width:800px;text-align:right;">3</div>
<div class="t" style="top:726.85px;font-size:10.1px;line-height:10.1px;color:#555;left:215.5px;width:800px;text-align:right;">2</div>
<div class="t" style="top:741.98px;font-size:11.6px;line-height:11.6px;color:#555;left:626px;width:800px;text-align:center;">09:54..</div>
<div class="t" style="top:741.98px;font-size:11.6px;line-height:11.6px;color:#555;left:760.3299999999999px;width:800px;text-align:center;">09:55 AM</div>
<div class="t" style="top:741.98px;font-size:11.6px;line-height:11.6px;color:#555;left:895.8599999999999px;width:800px;text-align:center;">09:56 AM</div>
<div class="t" style="top:741.98px;font-size:11.6px;line-height:11.6px;color:#555;left:1031.3899999999999px;width:800px;text-align:center;">09:57 AM</div>
<div class="t" style="top:741.98px;font-size:11.6px;line-height:11.6px;color:#555;left:1166.92px;width:800px;text-align:center;">09:58 AM</div>
<div class="t" style="top:741.98px;font-size:11.6px;line-height:11.6px;color:#555;left:1302.4499999999998px;width:800px;text-align:center;">09:59 AM</div>
<div class="t" style="top:741.98px;font-size:11.6px;line-height:11.6px;color:#555;left:1434.5px;width:800px;text-align:center;">10</div>
<div class="r" style="left:990px;top:740px;width:19.5px;height:15px;background:#fff;"></div>
<div class="r" style="left:0px;top:762px;width:1908px;height:2px;background:#d4d4d4;"></div>
</body></html>
